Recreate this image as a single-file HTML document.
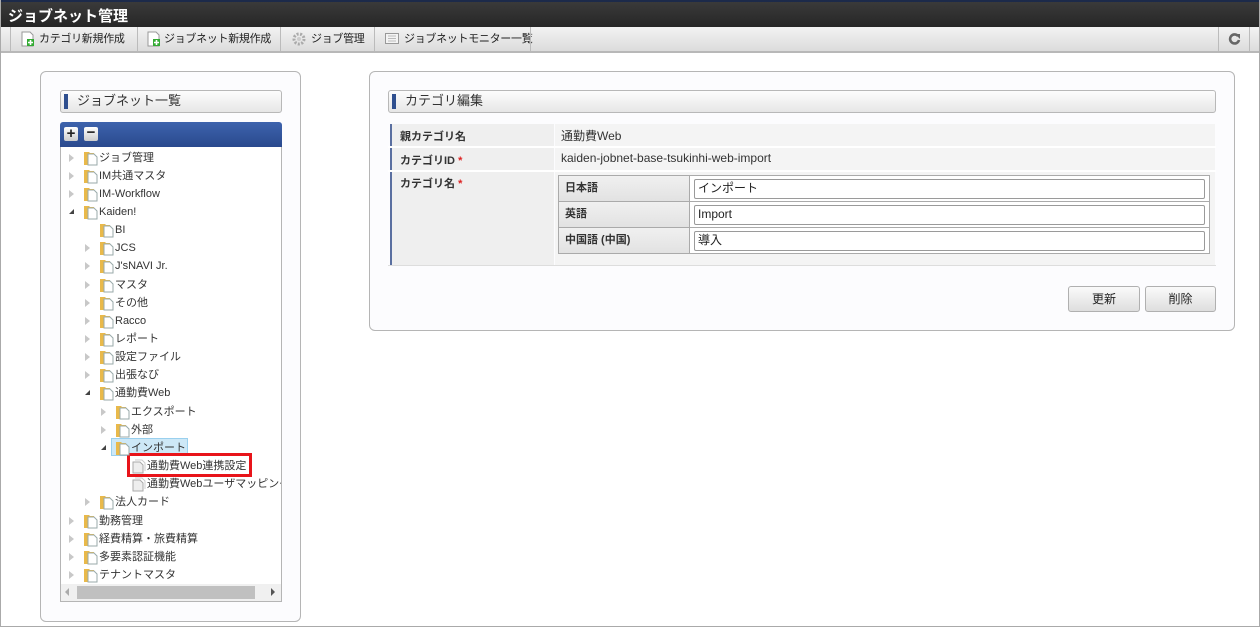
<!DOCTYPE html>
<html><head><meta charset="utf-8"><style>
*{margin:0;padding:0;box-sizing:border-box}
body{width:1260px;height:627px;position:relative;overflow:hidden;background:#fff;font-family:"Liberation Sans","Noto Sans CJK JP",sans-serif;font-size:12px;color:#333}
.a{position:absolute}
.frame{left:0;top:0;width:1260px;height:627px;border-left:1px solid #aaa;border-right:1px solid #aaa;border-bottom:1px solid #aaa}
.title{left:0;top:0;width:1260px;height:27px;background:linear-gradient(#3a3a3a,#262626);border-top:2px solid #1c2a4a;color:#fff;font-weight:bold;font-size:15px;padding:3px 0 0 8px}
.tb{left:0;top:27px;width:1260px;height:26px;background:linear-gradient(#f2f2f2,#dcdcdc);border-bottom:2px solid #b8b8b8}
.tbi{position:absolute;top:0;height:24px;border-left:1px solid #bbb;font-size:11px;letter-spacing:-0.3px;line-height:24px;color:#222;white-space:nowrap}
.panel{background:#fcfcfe;border:1px solid #b5b5b5;border-radius:6px}
.hdr{background:linear-gradient(#fdfdfd,#e6e6e6);border:1px solid #b8b8b8;border-radius:3px;font-size:13px;color:#333;padding:0 0 0 16px;line-height:20px}
.hdr:before{content:"";position:absolute;left:3px;top:3px;width:4px;height:15px;background:#2f4f8f}
.row{position:absolute;height:18px;line-height:18px;font-size:11px;white-space:nowrap;color:#333}
.tri{position:absolute;top:5px;width:0;height:0;border-top:4px solid transparent;border-bottom:4px solid transparent;border-left:5px solid #c8c8c8}
.open{position:absolute;top:6px;width:0;height:0;border-left:5px solid transparent;border-bottom:5px solid #444}
.fd{position:absolute;top:1px}
.lab{background:#efefef;border-left:2px solid #5a6fa0;font-size:11px}
.btn{background:linear-gradient(#fafafa,#dedede);border:1px solid #b0b0b0;border-radius:3px;text-align:center;font-size:12px;line-height:24px;color:#222}
.inp{background:#fff;border:1px solid #9a9a9a;border-radius:2px;height:20px;font-size:12px;line-height:17px;padding:0 3px;color:#222}
.il{background:linear-gradient(#f0f0f0,#e2e2e2);border-right:1px solid #aaa;border-bottom:1px solid #aaa;font-weight:bold;font-size:11px;padding:3px 0 0 6px}
</style></head><body>
<div class="a title">ジョブネット管理</div>
<div class="a tb">
 <div class="tbi" style="left:10px;width:127px"><svg style="position:absolute;left:10px;top:4px" width="14" height="16"><path d="M1 1h8l3 3v11H1z" fill="#fff" stroke="#999"/><rect x="6" y="8" width="7" height="7" fill="#3a3" /><path d="M9.5 9v5M7 11.5h5" stroke="#fff" stroke-width="1.6"/></svg><span style="position:absolute;left:28px">カテゴリ新規作成</span></div>
 <div class="tbi" style="left:137px;width:143px"><svg style="position:absolute;left:9px;top:4px" width="14" height="16"><path d="M1 1h8l3 3v11H1z" fill="#fff" stroke="#999"/><rect x="6" y="8" width="7" height="7" fill="#3a3" /><path d="M9.5 9v5M7 11.5h5" stroke="#fff" stroke-width="1.6"/></svg><span style="position:absolute;left:26px">ジョブネット新規作成</span></div>
 <div class="tbi" style="left:280px;width:94px"><svg style="position:absolute;left:11px;top:5px" width="14" height="14"><circle cx="7" cy="7" r="5" fill="none" stroke="#aaa" stroke-width="3" stroke-dasharray="2 1.5"/><circle cx="7" cy="7" r="2" fill="#ccc"/></svg><span style="position:absolute;left:30px">ジョブ管理</span></div>
 <div class="tbi" style="left:374px;width:156px"><svg style="position:absolute;left:10px;top:6px" width="14" height="12"><rect x="0.5" y="0.5" width="13" height="10" fill="#f4f4f4" stroke="#999"/><path d="M3 3h8M3 5.5h8M3 8h8" stroke="#bbb"/></svg><span style="position:absolute;left:29px">ジョブネットモニター一覧</span></div>
 <div class="tbi" style="left:530px;width:1px"></div>
 <div class="tbi" style="left:1218px;width:32px;border-right:1px solid #bbb"><svg style="position:absolute;left:9px;top:5px" width="13" height="13"><path d="M10 4A4.5 4.5 0 1 0 11 8" fill="none" stroke="#666" stroke-width="2.6"/><path d="M7 2h5v5z" fill="#666"/></svg></div>
</div>

<div class="a panel" style="left:40px;top:71px;width:261px;height:551px"></div>
<div class="a hdr" style="left:60px;top:90px;width:222px;height:23px">ジョブネット一覧</div>
<div class="a" style="left:60px;top:122px;width:222px;height:26px;background:linear-gradient(#3d63ad,#29488c);border-radius:3px 3px 0 0"></div>
<div class="a" style="left:64px;top:127px;width:14px;height:14px;background:linear-gradient(#fff,#ccc);border-radius:2px;font-weight:bold;font-size:15px;line-height:13px;text-align:center;color:#222">+</div>
<div class="a" style="left:84px;top:127px;width:14px;height:14px;background:linear-gradient(#fff,#ccc);border-radius:2px;font-weight:bold;font-size:15px;line-height:12px;text-align:center;color:#222">−</div>
<div class="a" style="left:60px;top:147px;width:222px;height:455px;background:#fff;border:1px solid #b5b5b5;border-top:none;overflow:hidden"></div>
<div class="a" style="left:61px;top:584px;width:220px;height:17px;background:#f0f0f0"></div>
<div class="a" style="left:77px;top:586px;width:178px;height:13px;background:#c0c0c0"></div>
<div class="a" style="left:65px;top:588px;border-top:4px solid transparent;border-bottom:4px solid transparent;border-right:4px solid #aaa"></div>
<div class="a" style="left:271px;top:588px;border-top:4px solid transparent;border-bottom:4px solid transparent;border-left:4px solid #555"></div>
<div class="a" style="left:111px;top:438px;width:77px;height:18px;background:#cde8f7;border:1px solid #9ad0ee"></div>
<div class="a" style="left:127px;top:453px;width:125px;height:24px;border:3px solid #e8141a"></div>

<div id="rows"></div>

<div class="a panel" style="left:369px;top:71px;width:866px;height:260px"></div>
<div class="a hdr" style="left:388px;top:90px;width:828px;height:23px">カテゴリ編集</div>
<div class="a lab" style="left:390px;top:124px;width:164px;height:22px;padding:4px 0 0 8px;font-weight:bold">親カテゴリ名</div>
<div class="a" style="left:555px;top:124px;width:660px;height:22px;background:#f4f4f4;padding:3px 0 0 6px">通勤費Web</div>
<div class="a lab" style="left:390px;top:148px;width:164px;height:22px;padding:4px 0 0 8px;font-weight:bold">カテゴリID <span style="color:#d22">*</span></div>
<div class="a" style="left:555px;top:148px;width:660px;height:22px;background:#f4f4f4;padding:3px 0 0 6px">kaiden-jobnet-base-tsukinhi-web-import</div>
<div class="a lab" style="left:390px;top:172px;width:164px;height:93px;padding:3px 0 0 8px;font-weight:bold">カテゴリ名 <span style="color:#d22">*</span></div>
<div class="a" style="left:555px;top:172px;width:660px;height:93px;background:#f4f4f4"></div>
<div class="a" style="left:388px;top:146px;width:828px;height:2px;background:#fff"></div>
<div class="a" style="left:388px;top:170px;width:828px;height:2px;background:#fff"></div>
<div class="a" style="left:388px;top:265px;width:828px;height:1px;background:#ddd"></div>
<div class="a" style="left:558px;top:175px;width:652px;height:79px;border:1px solid #aaa;border-bottom:none;background:#fff"></div>
<div class="a il" style="left:559px;top:176px;width:131px;height:26px">日本語</div>
<div class="a il" style="left:559px;top:202px;width:131px;height:26px">英語</div>
<div class="a il" style="left:559px;top:228px;width:131px;height:26px">中国語 (中国)</div>
<div class="a" style="left:690px;top:201px;width:519px;height:1px;background:#aaa"></div>
<div class="a" style="left:690px;top:227px;width:519px;height:1px;background:#aaa"></div>
<div class="a" style="left:690px;top:253px;width:519px;height:1px;background:#aaa"></div>
<div class="a inp" style="left:694px;top:179px;width:511px">インポート</div>
<div class="a inp" style="left:694px;top:205px;width:511px">Import</div>
<div class="a inp" style="left:694px;top:231px;width:511px">導入</div>
<div class="a btn" style="left:1068px;top:286px;width:72px;height:26px">更新</div>
<div class="a btn" style="left:1145px;top:286px;width:71px;height:26px">削除</div>
<div class="a frame"></div>

<script>
var F='<svg width="15" height="16"><path d="M1 2h5l1 1h4v12H1z" fill="#e9b94a"/><path d="M5 4h6l3 3v8H5z" fill="#fff" stroke="#9aa" stroke-width="1"/></svg>';
var P='<svg width="15" height="16"><path d="M2 4h7l3 3v8H2z" fill="#eee" stroke="#aaa"/><path d="M4 2h7l3 3v8" fill="none" stroke="#ccc"/></svg>';
var d=[[0,'c','ジョブ管理'],[0,'c','IM共通マスタ'],[0,'c','IM-Workflow'],[0,'o','Kaiden!'],[1,'n','BI'],[1,'c','JCS'],[1,'c',"J'sNAVI Jr."],[1,'c','マスタ'],[1,'c','その他'],[1,'c','Racco'],[1,'c','レポート'],[1,'c','設定ファイル'],[1,'c','出張なび'],[1,'o','通勤費Web'],[2,'c','エクスポート'],[2,'c','外部'],[2,'o','インポート'],[3,'p','通勤費Web連携設定'],[3,'p','通勤費Webユーザマッピング'],[1,'c','法人カード'],[0,'c','勤務管理'],[0,'c','経費精算・旅費精算'],[0,'c','多要素認証機能'],[0,'c','テナントマスタ']];
var h='';
for(var i=0;i<d.length;i++){var r=d[i],y=148.5+i*18.15,x=70+r[0]*16;
h+='<div class="row" style="left:0;top:'+y+'px;width:281px;overflow:hidden;clip-path:inset(0 0 0 60px)">';
if(r[1]=='c')h+='<div class="tri" style="left:'+(x-1)+'px"></div>';
if(r[1]=='o')h+='<div class="open" style="left:'+(x-1)+'px"></div>';
h+='<div class="fd" style="left:'+(x+13)+'px">'+(r[1]=='p'?P:F)+'</div>';
h+='<span style="position:absolute;left:'+(x+29)+'px">'+r[2]+'</span></div>';}
document.getElementById('rows').innerHTML=h;
</script>
</body></html>
